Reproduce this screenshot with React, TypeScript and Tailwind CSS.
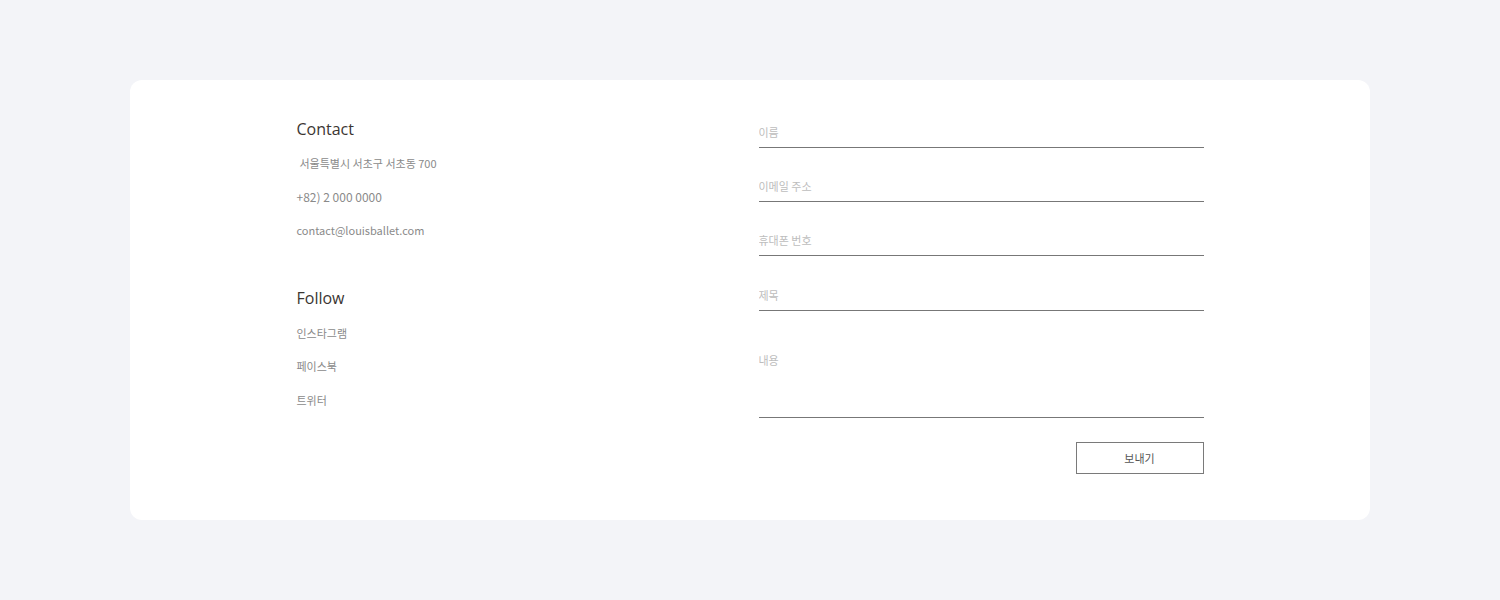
import { useState } from "react";

const body = "font-['Noto_Sans_CJK_KR',sans-serif]";
const head = "font-['Open_Sans','Noto_Sans_CJK_KR',sans-serif]";

function Field({ placeholder, className = "" }: { placeholder: string; className?: string }) {
  const [value, setValue] = useState("");
  return (
    <input
      value={value}
      onChange={(e) => setValue(e.target.value)}
      placeholder={placeholder}
      className={`h-[28px] w-full border-b border-[#777] bg-transparent pb-[4px] text-[11px] text-[#555] outline-none placeholder:text-[#bdbdbd] ${className}`}
    />
  );
}

export default function App() {
  return (
    <div className={`min-h-[600px] bg-[#f3f4f8] pt-[80px] ${body}`}>
      <div className="mx-[130px] rounded-[12px] bg-white pt-[40px] pb-[46px]">
        <div className="mx-auto flex w-[907px] justify-between">
          {/* left */}
          <div className="w-[440px]">
            <h2 className={`text-[16px] leading-[18px] text-[#3b3632] ${head}`}>Contact</h2>
            <p className="mt-[15px] pl-[3px] text-[11px] leading-[20px] text-[#8a8a8a]">
              서울특별시 서초구 서초동 700
            </p>
            <p className="mt-[14px] text-[12px] leading-[20px] text-[#8a8a8a]">+82) 2 000 0000</p>
            <p className="mt-[13px] text-[11px] leading-[20px] text-[#8a8a8a]">
              contact@louisballet.com
            </p>

            <h2 className={`mt-[48px] text-[16px] leading-[20px] text-[#3b3632] ${head}`}>Follow</h2>
            <ul className="text-[11px] leading-[20px] text-[#8a8a8a]">
              <li className="mt-[15px]">인스타그램</li>
              <li className="mt-[13px]">페이스북</li>
              <li className="mt-[14px]">트위터</li>
            </ul>
          </div>

          {/* right */}
          <form className="flex w-[445px] flex-col" onSubmit={(e) => e.preventDefault()}>
            <div className="flex flex-col gap-[26px]">
              <Field placeholder="이름" />
              <Field placeholder="이메일 주소" />
              <Field placeholder="휴대폰 번호" />
              <Field placeholder="제목" className="mt-[1px]" />
              <textarea
                placeholder="내용"
                className="h-[81px] w-full resize-none border-b border-[#777] bg-transparent pt-[13px] text-[11px] leading-[20px] text-[#555] outline-none placeholder:text-[#bdbdbd]"
              />
            </div>
            <button
              type="submit"
              className="mt-[24px] ml-auto h-[32px] w-[128px] border border-[#7a7a7a] bg-white text-[11px] text-[#555]"
            >
              보내기
            </button>
          </form>
        </div>
      </div>
    </div>
  );
}
